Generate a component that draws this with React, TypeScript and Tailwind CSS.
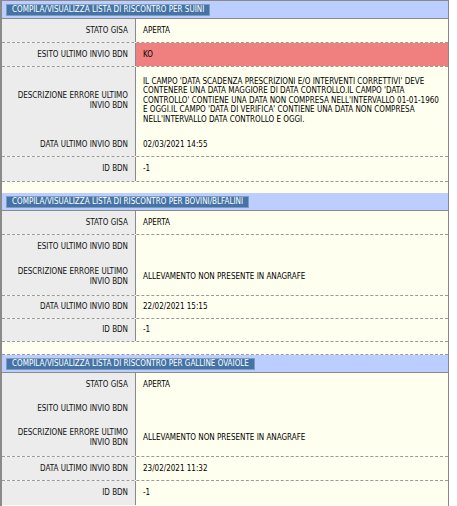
import React from "react";

type Row = {
  label: string[];
  value: React.ReactNode;
  h: number;
  dashed: boolean;
  red?: boolean;
};

type Section = {
  title: string;
  rows: Row[];
  spacerH: number;
  spacerDashed: boolean;
};

const errLines = [
  "IL CAMPO 'DATA SCADENZA PRESCRIZIONI E/O INTERVENTI CORRETTIVI' DEVE",
  "CONTENERE UNA DATA MAGGIORE DI DATA CONTROLLO.IL CAMPO 'DATA",
  "CONTROLLO' CONTIENE UNA DATA NON COMPRESA NELL'INTERVALLO 01-01-1960",
  "E OGGI.IL CAMPO 'DATA DI VERIFICA' CONTIENE UNA DATA NON COMPRESA",
  "NELL'INTERVALLO DATA CONTROLLO E OGGI.",
];

const sections: Section[] = [
  {
    title: "COMPILA/VISUALIZZA LISTA DI RISCONTRO PER SUINI",
    rows: [
      { label: ["STATO GISA"], value: "APERTA", h: 24, dashed: true },
      { label: ["ESITO ULTIMO INVIO BDN"], value: "KO", h: 24, dashed: true, red: true },
      {
        label: ["DESCRIZIONE ERRORE ULTIMO", "INVIO BDN"],
        value: (
          <div className="flex flex-col">
            {errLines.map((l, i) => (
              <span key={i} className="whitespace-nowrap">
                {l}
              </span>
            ))}
          </div>
        ),
        h: 67,
        dashed: false,
      },
      { label: ["DATA ULTIMO INVIO BDN"], value: "02/03/2021 14:55", h: 23, dashed: true },
      { label: ["ID BDN"], value: "-1", h: 25, dashed: true },
    ],
    spacerH: 11,
    spacerDashed: false,
  },
  {
    title: "COMPILA/VISUALIZZA LISTA DI RISCONTRO PER BOVINI/BLFALINI",
    rows: [
      { label: ["STATO GISA"], value: "APERTA", h: 24, dashed: true },
      { label: ["ESITO ULTIMO INVIO BDN"], value: "", h: 23, dashed: false },
      {
        label: ["DESCRIZIONE ERRORE ULTIMO", "INVIO BDN"],
        value: "ALLEVAMENTO NON PRESENTE IN ANAGRAFE",
        h: 38,
        dashed: true,
      },
      { label: ["DATA ULTIMO INVIO BDN"], value: "22/02/2021 15:15", h: 23, dashed: true },
      { label: ["ID BDN"], value: "-1", h: 23, dashed: true },
    ],
    spacerH: 13,
    spacerDashed: true,
  },
  {
    title: "COMPILA/VISUALIZZA LISTA DI RISCONTRO PER GALLINE OVAIOLE",
    rows: [
      { label: ["STATO GISA"], value: "APERTA", h: 24, dashed: false },
      { label: ["ESITO ULTIMO INVIO BDN"], value: "", h: 23, dashed: false },
      {
        label: ["DESCRIZIONE ERRORE ULTIMO", "INVIO BDN"],
        value: "ALLEVAMENTO NON PRESENTE IN ANAGRAFE",
        h: 37,
        dashed: true,
      },
      { label: ["DATA ULTIMO INVIO BDN"], value: "23/02/2021 11:32", h: 24, dashed: true },
      { label: ["ID BDN"], value: "-1", h: 24, dashed: false },
    ],
    spacerH: 20,
    spacerDashed: false,
  },
];

function Header({ title }: { title: string }) {
  return (
    <div className="h-[18px] bg-[#bbceff] border-b border-[#8a8a8a] flex items-center pl-[4px]">
      <div className="h-[12px] flex items-center bg-[#4474a6] border border-[#7e9cc2] px-[5px] text-white leading-none">
        {title}
      </div>
    </div>
  );
}

function RowView({ row }: { row: Row }) {
  return (
    <div
      className={
        "flex " + (row.dashed ? "border-b border-dashed border-[#9a9a9a]" : "")
      }
      style={{ height: row.h }}
    >
      <div className="w-[134px] shrink-0 bg-[#ececec] border-r border-[#8a8a8a] flex flex-col justify-center items-end pr-[7px] text-[#111] leading-[9.6px]">
        {row.label.map((l, i) => (
          <span key={i} className="whitespace-nowrap">
            {l}
          </span>
        ))}
      </div>
      <div
        className={
          "flex-1 flex items-center pl-[7px] text-black leading-[9.6px] " +
          (row.red ? "bg-[#f08080]" : "")
        }
      >
        {row.value}
      </div>
    </div>
  );
}

export default function App() {
  return (
    <div className="w-[457px] h-[506px] bg-white overflow-hidden">
      <div
        className="w-[449px] bg-[#fffff0] border-t border-l-2 border-r border-[#8a8a8a] text-[8px]"
        style={{ fontFamily: "'DejaVu Sans Condensed', 'DejaVu Sans', sans-serif" }}
      >
        {sections.map((s, i) => (
          <div key={i}>
            <Header title={s.title} />
            {s.rows.map((r, j) => (
              <RowView key={j} row={r} />
            ))}
            <div
              className={s.spacerDashed ? "border-b border-dashed border-[#9a9a9a]" : ""}
              style={{ height: s.spacerH }}
            />
          </div>
        ))}
      </div>
    </div>
  );
}
